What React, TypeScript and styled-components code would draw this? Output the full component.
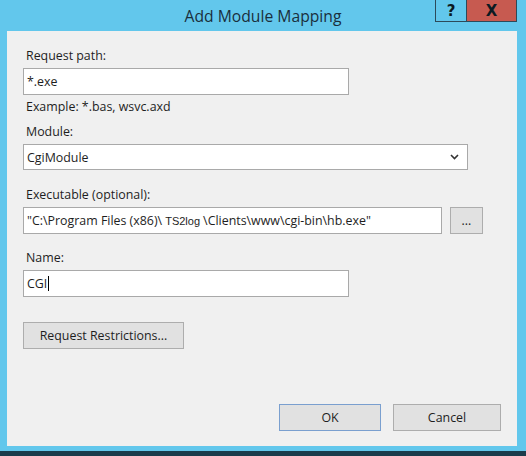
import styled, { createGlobalStyle } from "styled-components";

const GlobalStyle = createGlobalStyle`
  html, body {
    margin: 0;
    padding: 0;
    background: #1b3b4b;
  }
  * {
    box-sizing: border-box;
  }
`;

const WindowFrame = styled.div`
  width: 526px;
  height: 456px;
  background: #62c7ec;
  border-bottom: 5px solid #1b3b4b;
  display: flex;
  flex-direction: column;
  font-family: "Open Sans", "Noto Sans", sans-serif;
`;

const TitleBar = styled.div`
  height: 31px;
  display: grid;
  grid-template-columns: 1fr auto 1fr;
  align-items: start;
`;

const Title = styled.div`
  grid-column: 2;
  padding-top: 5px;
  font-size: 15.7px;
  color: #1a2f3c;
  line-height: 22px;
`;

const Controls = styled.div`
  grid-column: 3;
  justify-self: end;
  display: flex;
  margin-right: 9px;
`;

const CaptionButton = styled.div<{ $close?: boolean }>`
  width: ${(p) => (p.$close ? "50px" : "32px")};
  height: 22px;
  background: ${(p) => (p.$close ? "#c75a50" : "#62c7ec")};
  border: 1px solid #2c4a5a;
  border-top: none;
  border-left: ${(p) => (p.$close ? "none" : "1px solid #2c4a5a")};
  display: flex;
  align-items: center;
  justify-content: center;
  color: #0c1a22;
  font-family: "DejaVu Sans", sans-serif;
  font-weight: bold;
  font-size: 15px;
`;

const Content = styled.div`
  flex: 1;
  margin: 0 9px 5px 7px;
  background: #f0f0f0;
  padding: 17px 16px 15px 16px;
  display: flex;
  flex-direction: column;
  font-size: 12.4px;
  color: #1e1e1e;
`;

const Label = styled.div<{ $top?: number }>`
  line-height: 16px;
  padding-left: 3px;
  margin-top: ${(p) => p.$top ?? 0}px;
  margin-bottom: 4px;
`;

const Hint = styled.div`
  line-height: 16px;
  padding-left: 3px;
  margin-top: 4px;
`;

const TextBox = styled.div<{ $width: number }>`
  width: ${(p) => p.$width}px;
  height: 27px;
  background: #ffffff;
  border: 1px solid #a9a9a9;
  padding-left: 3px;
  display: flex;
  align-items: center;
  white-space: nowrap;
  overflow: hidden;
`;

const Small = styled.span`
  font-family: "Liberation Sans", Arial, sans-serif;
  font-size: 11px;
`;

const Caret = styled.span`
  display: inline-block;
  width: 1px;
  height: 15px;
  background: #000;
  margin-left: 1px;
`;

const Select = styled.div`
  width: 445px;
  height: 26px;
  background: #ffffff;
  border: 1px solid #a9a9a9;
  padding: 0 8px 0 3px;
  display: flex;
  align-items: center;
  justify-content: space-between;
`;

const Row = styled.div`
  display: flex;
  align-items: flex-start;
  gap: 8px;
`;

const Button = styled.div<{ $width: number; $default?: boolean; $top?: number }>`
  width: ${(p) => p.$width}px;
  height: 27px;
  margin-top: ${(p) => p.$top ?? 0}px;
  background: #e1e1e1;
  border: 1px solid ${(p) => (p.$default ? "#7a9fcf" : "#adadad")};
  display: flex;
  align-items: center;
  justify-content: center;
  color: #1e1e1e;
`;

const Footer = styled.div`
  margin-top: auto;
  display: flex;
  justify-content: flex-end;
  gap: 12px;
`;

export default function App() {
  return (
    <>
      <GlobalStyle />
      <WindowFrame>
        <TitleBar>
          <Title>Add Module Mapping</Title>
          <Controls>
            <CaptionButton>?</CaptionButton>
            <CaptionButton $close>X</CaptionButton>
          </Controls>
        </TitleBar>
        <Content>
          <Label>Request path:</Label>
          <TextBox $width={326}>*.exe</TextBox>
          <Hint>Example: *.bas, wsvc.axd</Hint>
          <Label $top={9}>Module:</Label>
          <Select>
            <span>CgiModule</span>
            <svg width="9" height="6" viewBox="0 0 9 6">
              <path d="M1 1 L4.5 4.5 L8 1" stroke="#333" strokeWidth="1.6" fill="none" />
            </svg>
          </Select>
          <Label $top={17}>Executable (optional):</Label>
          <Row>
            <TextBox $width={419}>
              "C:\Program Files (x86)\ <Small>&nbsp;TS2log&nbsp;</Small> \Clients\www\cgi-bin\hb.exe"
            </TextBox>
            <Button $width={33}>...</Button>
          </Row>
          <Label $top={16}>Name:</Label>
          <TextBox $width={326}>
            CGI
            <Caret />
          </TextBox>
          <Button $width={161} $top={25}>
            Request Restrictions...
          </Button>
          <Footer>
            <Button $width={102} $default>
              OK
            </Button>
            <Button $width={108}>Cancel</Button>
          </Footer>
        </Content>
      </WindowFrame>
    </>
  );
}
